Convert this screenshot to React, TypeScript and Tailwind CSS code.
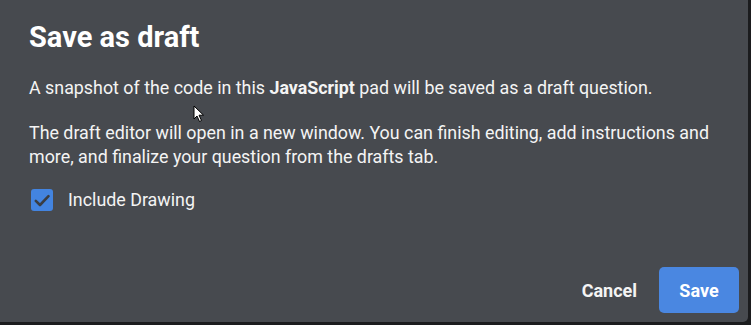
import React from "react";

export default function App() {
  return (
    <div className="w-[751px] h-[325px] bg-[#1b1c1e] overflow-hidden" style={{ fontFamily: "Roboto, 'Liberation Sans', sans-serif" }}>
      <div className="relative w-[748px] h-[322px] bg-[#474a4f] rounded-br-[5px] flex flex-col pl-[29px] pr-[9px] text-[#f4f4f4]">
        <h1 className="mt-[20px] text-[29px] leading-[34px] font-bold text-white">Save as draft</h1>
        <p className="mt-[22px] text-[17.85px] leading-[24px]">
          A snapshot of the code in this <span className="font-bold">JavaScript</span> pad will be saved as a draft question.
        </p>
        <p className="mt-[21px] text-[17.85px] leading-[24px] w-[700px]">
          The draft editor will open in a new window. You can finish editing, add instructions and more, and finalize your question from the drafts tab.
        </p>
        <label className="mt-[19px] flex items-center gap-[15px] ml-[2px]">
          <span className="w-[22px] h-[22px] rounded-[3px] bg-[#4384e0] flex items-center justify-center">
            <svg width="22" height="22" viewBox="0 0 22 22" fill="none" stroke="#3a3d42" strokeWidth="2.6" strokeLinecap="round" strokeLinejoin="round">
              <path d="M4.8 11.8L9 16L17.5 7.2" />
            </svg>
          </span>
          <span className="text-[17.85px] leading-[24px]">Include Drawing</span>
        </label>
        <div className="mt-auto mb-[9px] flex items-center justify-end gap-[22px]">
          <button className="text-[18px] font-bold text-[#f4f4f4]">Cancel</button>
          <button className="w-[80px] h-[46px] rounded-[5px] bg-[#4a87e1] text-[18px] font-bold text-white">Save</button>
        </div>
        <svg className="absolute left-[193px] top-[105px]" width="12" height="18" viewBox="0 0 12 18">
          <path d="M1 1 L1 14 L4 11 L6.5 16.5 L8.5 15.5 L6 10.2 L10.5 10.2 Z" fill="#fff" stroke="#000" strokeWidth="1" strokeLinejoin="round" />
        </svg>
      </div>
    </div>
  );
}
